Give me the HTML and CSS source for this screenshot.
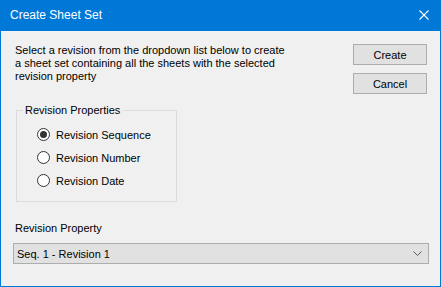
FILE: index.html
```html
<!DOCTYPE html>
<html>
<head>
<meta charset="utf-8">
<link rel="stylesheet" href="styles.css">
</head>
<body>
<div class="window">
  <div class="titlebar">
    <span class="title">Create Sheet Set</span>
    <svg class="close" width="10" height="10" viewBox="0 0 10 10"><path d="M0.5 0.5 L9.5 9.5 M9.5 0.5 L0.5 9.5" stroke="#fff" stroke-width="1.1" fill="none"/></svg>
  </div>
  <div class="content">
    <div class="toprow">
      <p class="desc">Select a revision from the dropdown list below to create a sheet set containing all the sheets with the selected revision property</p>
      <div class="buttons">
        <button class="btn">Create</button>
        <button class="btn">Cancel</button>
      </div>
    </div>
    <fieldset class="group">
      <legend class="legend">Revision Properties</legend>
      <label class="radio"><span class="circle checked"></span><span>Revision Sequence</span></label>
      <label class="radio"><span class="circle"></span><span>Revision Number</span></label>
      <label class="radio"><span class="circle"></span><span>Revision Date</span></label>
    </fieldset>
    <div class="proplabel">Revision Property</div>
    <div class="combo">
      <span>Seq. 1 - Revision 1</span>
      <svg class="chev" width="9" height="5" viewBox="0 0 9 5"><path d="M0.5 0.5 L4.5 4.5 L8.5 0.5" stroke="#5a5a5a" stroke-width="1" fill="none"/></svg>
    </div>
  </div>
</div>
</body>
</html>
```
FILE: styles.css
```css
* { box-sizing: border-box; }
html, body { margin: 0; padding: 0; }
body {
  width: 441px;
  height: 287px;
  font-family: "Liberation Sans", Arial, sans-serif;
  font-size: 11px;
  color: #000;
}
.window {
  width: 441px;
  height: 287px;
  background: #f0f0f0;
  border: 1px solid #0078d7;
  border-top: none;
  display: flex;
  flex-direction: column;
}
.titlebar {
  height: 31px;
  margin: 0 -1px;
  background: #0078d7;
  color: #fff;
  display: flex;
  align-items: center;
  justify-content: space-between;
  padding: 0 12px 2px 10px;
  font-size: 12px;
}
.close { display: block; margin-top: 1px; }
.content {
  padding: 13px 12px 0 12px;
  display: flex;
  flex-direction: column;
}
.toprow {
  display: flex;
  justify-content: space-between;
  align-items: flex-start;
}
.desc {
  margin: 0 0 0 2px;
  width: 274px;
  line-height: 13px;
}
.buttons {
  display: flex;
  flex-direction: column;
  gap: 8px;
  margin-right: 1px;
}
.btn {
  width: 74px;
  height: 21px;
  background: #e1e1e1;
  border: 1px solid #adadad;
  font-family: "Liberation Sans", Arial, sans-serif;
  font-size: 11px;
  color: #000;
  padding: 0;
  margin: 0;
}
.group {
  margin: 10px 0 0 3px;
  width: 161px;
  height: 98px;
  border: 1px solid #dcdcdc;
  padding: 6px 0 0 0;
}
.legend {
  margin-left: 6px;
  padding: 0 3px 0 2px;
  line-height: 13px;
}
.radio {
  display: flex;
  align-items: center;
  gap: 6px;
  height: 23px;
  margin-left: 20px;
}
.circle {
  width: 13px;
  height: 13px;
  border: 1px solid #333;
  border-radius: 50%;
  background: #fff;
  display: flex;
  align-items: center;
  justify-content: center;
}
.circle.checked::after {
  content: "";
  width: 7px;
  height: 7px;
  border-radius: 50%;
  background: #333;
}
.proplabel {
  margin: 20px 0 0 2px;
  line-height: 13px;
}
.combo {
  margin: 8px 0 0 0;
  width: 416px;
  height: 21px;
  background: #e1e1e1;
  border: 1px solid #adadad;
  display: flex;
  align-items: center;
  justify-content: space-between;
  padding: 0 6px 0 3px;
}
.chev { display: block; }
```
